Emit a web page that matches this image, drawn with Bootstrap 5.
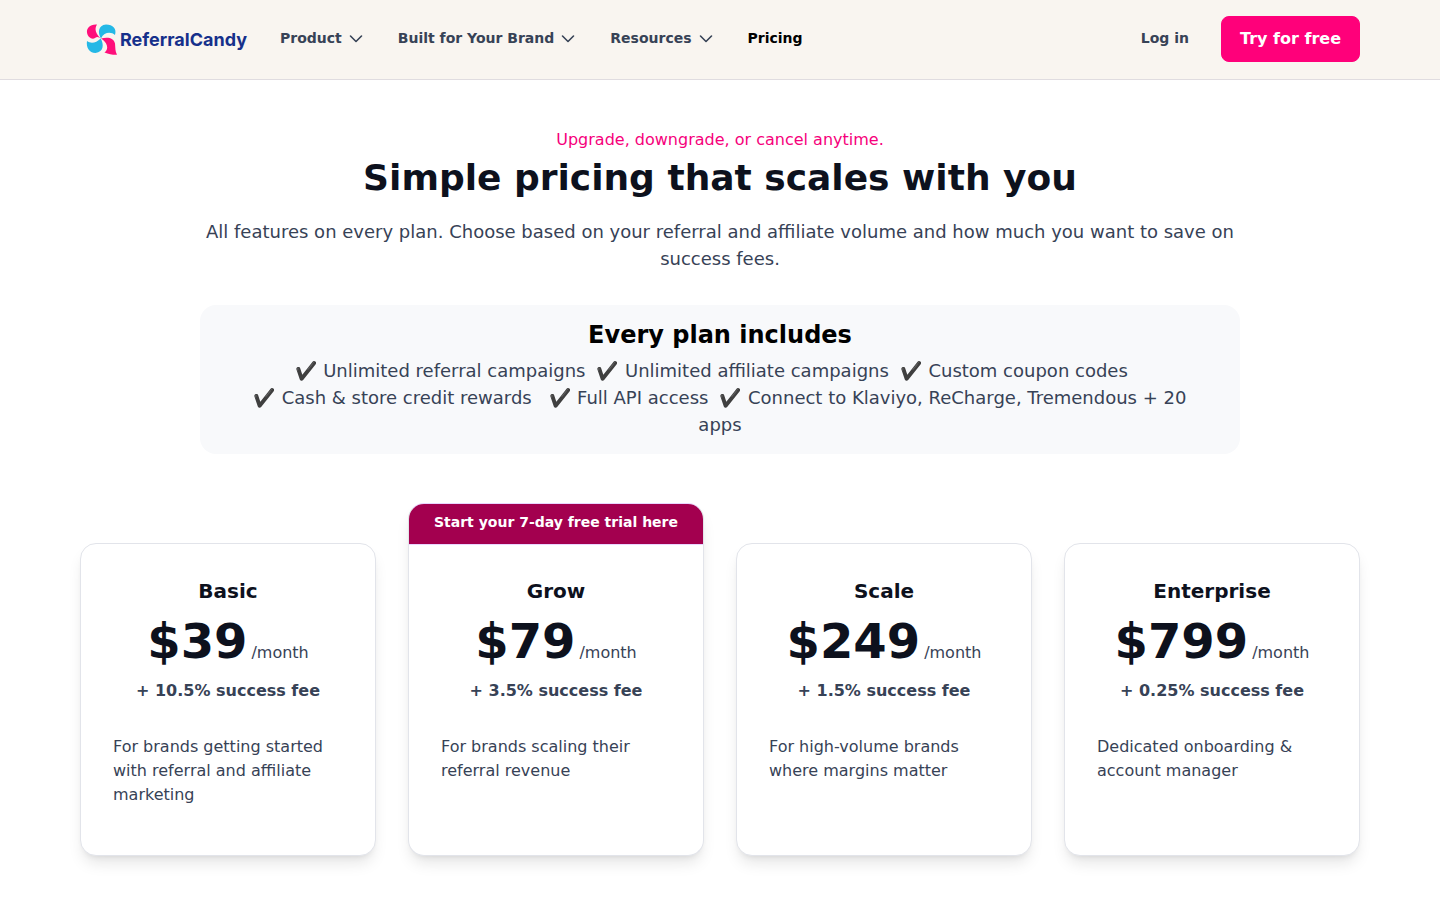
<!DOCTYPE html>
<html lang="en">
<head>
<meta charset="utf-8">
<meta name="viewport" content="width=device-width, initial-scale=1">
<title>Pricing - ReferralCandy</title>
<link href="https://cdn.jsdelivr.net/npm/bootstrap@5.3.0/dist/css/bootstrap.min.css" rel="stylesheet">
<style>
  body { font-family: "DejaVu Sans", "Noto Color Emoji", sans-serif; color: #374256; }
  .page-wrap { max-width: 1280px; }
  .site-header { background: #f9f5f0; border-bottom: 1px solid #e0dce0; }
  .site-header .page-wrap { padding: 16px 0 17px; gap: 32px; }
  .brand { width: 168px; height: 46px; }
  .nav-item-link { font-size: 14px; line-height: 20px; font-weight: 700; color: #374256; text-decoration: none; background: none; border: 0; padding: 0 0 2px; gap: 4px; }
  .nav-item-link.current { color: #000; }
  .nav-group { gap: 32px; }
  .btn-try { --bs-btn-color: #fff; --bs-btn-bg: #ff007a; --bs-btn-border-color: #ff007a; --bs-btn-hover-color: #fff; --bs-btn-hover-bg: #e0006c; --bs-btn-hover-border-color: #e0006c; --bs-btn-padding-x: 18px; --bs-btn-padding-y: 10px; --bs-btn-border-radius: 8px; font-weight: 700; }
  .intro { max-width: 1040px; padding-top: 48px; }
  .eyebrow { color: #f6007b; }
  .headline { font-size: 36px; line-height: 52px; font-weight: 700; color: #0d111d; margin-bottom: 14px; }
  .body-lg { font-size: 18px; line-height: 27px; }
  .includes { background: #f8f9fb; border-radius: 16px; padding: 16px 32px; margin-top: 33px; }
  .includes h2 { font-size: 24px; line-height: 29px; font-weight: 700; color: #000; margin-bottom: 7px; }
  .tick { filter: grayscale(1) brightness(.6); }
  .plans { padding: 49px 0 44px; --bs-gutter-x: 32px; }
  .plan { border: 1px solid #e2e4ea; border-radius: 16px; overflow: hidden; background: #fff; box-shadow: 0 10px 15px -3px rgba(0,0,0,.1), 0 4px 6px -4px rgba(0,0,0,.1); }
  .plan-flag { background: #a3004f; color: #fff; font-size: 14px; line-height: 20px; font-weight: 700; padding: 8px 8px 12px; }
  .plan.featured { border-top-color: #e9d5ff; }
  .plan.featured .plan-content { box-shadow: inset 0 1px #e9d5ff; }
  .plan-content { padding: 32px; }
  .plan-name { font-size: 20px; line-height: 30px; font-weight: 700; color: #0d111d; }
  .price { gap: 4px; margin-bottom: 3px; }
  .amount { font-size: 48px; line-height: 70px; font-weight: 700; color: #0d111d; }
  .fee { line-height: 24px; font-weight: 700; margin-bottom: 32px; }
  .summary { min-height: 72px; line-height: 24px; }
</style>
</head>
<body>
<header class="site-header">
  <div class="page-wrap mx-auto d-flex flex-wrap align-items-center">
    <a class="brand d-block" href="#" aria-label="ReferralCandy">
      <svg width="168" height="46" viewBox="0 0 168 46" aria-hidden="true">
        <path fill="#ff0f7b" d="M17 8.5C10 8 6.500 12 7 16.500C7.500 21 12 24 15 22C17 20.500 19 21 20.700 22.500C16 18 14 13 17 8.500Z"/>
        <path fill="#25b8e6" d="M21 22.500C17.500 17 18 9 26 8.500C33 8.500 37 13 35 19C31 15.500 24 16 21 22.500Z"/>
        <path fill="#25b8e6" d="M7 25C11 28 16 27 20.700 22.500C24 28 24 36 15.500 37C9 37 6 31 7 25Z"/>
        <path fill="#ff0f7b" d="M21 22.500C28 20.500 34 22 35 27.500C35.500 32 35 35 37 38.800C33.500 39 29 38.500 24.500 36.500C29.500 33 27 26 21 22.500Z"/>
        <text x="40" y="30" font-family="Inter, sans-serif" font-size="18" font-weight="700" fill="#16308b">ReferralCandy</text>
      </svg>
    </a>
    <nav class="nav-group d-flex flex-wrap align-items-center" aria-label="Main">
      <button type="button" class="nav-item-link d-flex align-items-center">Product
        <svg width="20" height="20" viewBox="0 0 20 20" fill="none" stroke="currentColor" stroke-width="1.6" stroke-linecap="round" stroke-linejoin="round" aria-hidden="true"><path d="M4.500 8l5.500 5.500 5.500-5.500"/></svg></button>
      <button type="button" class="nav-item-link d-flex align-items-center">Built for Your Brand
        <svg width="20" height="20" viewBox="0 0 20 20" fill="none" stroke="currentColor" stroke-width="1.6" stroke-linecap="round" stroke-linejoin="round" aria-hidden="true"><path d="M4.500 8l5.500 5.500 5.500-5.500"/></svg></button>
      <button type="button" class="nav-item-link d-flex align-items-center">Resources
        <svg width="20" height="20" viewBox="0 0 20 20" fill="none" stroke="currentColor" stroke-width="1.6" stroke-linecap="round" stroke-linejoin="round" aria-hidden="true"><path d="M4.500 8l5.500 5.500 5.500-5.500"/></svg></button>
      <a class="nav-item-link current" href="#" aria-current="page">Pricing</a>
    </nav>
    <div class="nav-group d-flex align-items-center ms-auto">
      <a class="nav-item-link" href="#">Log in</a>
      <button type="button" class="btn btn-try">Try for free</button>
    </div>
  </div>
</header>

<main>
  <section class="intro mx-auto text-center">
    <p class="eyebrow mb-0">Upgrade, downgrade, or cancel anytime.</p>
    <h1 class="headline">Simple pricing that scales with you</h1>
    <p class="body-lg mb-0">All features on every plan. Choose based on your referral and affiliate volume and how much you want to save on success fees.</p>
    <div class="includes">
      <h2>Every plan includes</h2>
      <p class="body-lg mb-0"><span class="tick">✔️</span> Unlimited referral campaigns&nbsp; <span class="tick">✔️</span> Unlimited affiliate campaigns&nbsp; <span class="tick">✔️</span> Custom coupon codes&nbsp;&nbsp;&nbsp;<br><span class="tick">✔️</span> Cash &amp; store credit rewards&nbsp;&nbsp; <span class="tick">✔️</span> Full API access&nbsp; <span class="tick">✔️</span> Connect to Klaviyo, ReCharge, Tremendous + 20 apps</p>
    </div>
  </section>

  <section class="page-wrap mx-auto">
    <div class="plans row row-cols-1 row-cols-md-2 row-cols-xl-4 align-items-end">
      <div class="col">
        <article class="plan"><div class="plan-content">
          <div class="text-center">
            <h3 class="plan-name mb-0">Basic</h3>
            <p class="price d-flex justify-content-center align-items-baseline"><span class="amount">$39</span> <span>/month</span></p>
            <p class="fee">+ 10.5% success fee</p>
          </div>
          <p class="summary">For brands getting started with referral and affiliate marketing</p>
        </div></article>
      </div>
      <div class="col">
        <article class="plan featured">
          <div class="plan-flag text-center">Start your 7-day free trial here</div>
          <div class="plan-content">
          <div class="text-center">
            <h3 class="plan-name mb-0">Grow</h3>
            <p class="price d-flex justify-content-center align-items-baseline"><span class="amount">$79</span> <span>/month</span></p>
            <p class="fee">+ 3.5% success fee</p>
          </div>
          <p class="summary">For brands scaling their referral revenue</p>
        </div></article>
      </div>
      <div class="col">
        <article class="plan"><div class="plan-content">
          <div class="text-center">
            <h3 class="plan-name mb-0">Scale</h3>
            <p class="price d-flex justify-content-center align-items-baseline"><span class="amount">$249</span> <span>/month</span></p>
            <p class="fee">+ 1.5% success fee</p>
          </div>
          <p class="summary">For high-volume brands where margins matter</p>
        </div></article>
      </div>
      <div class="col">
        <article class="plan"><div class="plan-content">
          <div class="text-center">
            <h3 class="plan-name mb-0">Enterprise</h3>
            <p class="price d-flex justify-content-center align-items-baseline"><span class="amount">$799</span> <span>/month</span></p>
            <p class="fee">+ 0.25% success fee</p>
          </div>
          <p class="summary">Dedicated onboarding &amp; account manager</p>
        </div></article>
      </div>
    </div>
  </section>
</main>
<script src="https://cdn.jsdelivr.net/npm/bootstrap@5.3.0/dist/js/bootstrap.bundle.min.js"></script>
</body>
</html>
